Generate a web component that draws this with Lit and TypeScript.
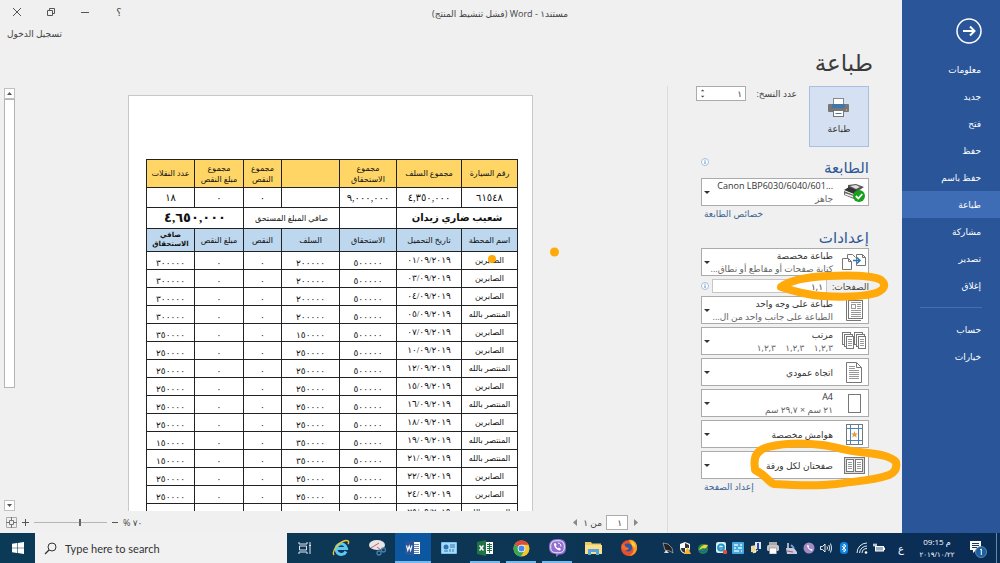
import { LitElement, html, css, svg, nothing } from "lit";
import type { TemplateResult } from "lit";
import { customElement, property } from "lit/decorators.js";
import { classMap } from "lit/directives/class-map.js";

type Glyph = TemplateResult;

const page = (x: number, y: number, w: number, h: number) =>
  svg`<rect x=${x} y=${y} width=${w} height=${h} fill="#fff" stroke="#777" />`;
const lines = (x: number, w: number, ys: number[]) =>
  ys.map((y) => svg`<path d=${`M${x} ${y}h${w}`} stroke="#999" />`);

const settingIcons: Record<string, Glyph> = {
  printer: html`<svg width="24" height="24" viewBox="0 0 24 24">
    <path d="M6 5l8-1 8 3-6 4-10-3z" fill="#555" /><path d="M8 6l6-1 4 2-4 2z" fill="#ddd" />
    <path d="M2 10l5-3 10 4-5 3z" fill="#333" /><path d="M2 11l10 4v4L2 15z" fill="#666" />
    <path d="M3 14l9 3" stroke="#eee" stroke-width="1.5" /><path d="M12 15l6-4v5l-6 3z" fill="#444" />
    <circle cx="17" cy="16" r="6" fill="#16a01c" />
    <path d="M13.800 16l2.500 2.500 4-4.500" fill="none" stroke="#fff" stroke-width="1.800" />
  </svg>`,
  custom: html`<svg width="24" height="24" viewBox="0 0 24 24" fill="#fff" stroke="#777">
    <path d="M5.500 13V4.500h5l3 3" /><path d="M.5 8.500h6l3 3v8h-9z" /><path d="M6.500 8.500v3h3" fill="none" />
    <path d="M14.500 4.500h6l3 3v8h-9z" /><path d="M20.500 4.500v3h3" fill="none" />
    <path d="M11 10.500h7M15 7.500l3 3-3 3" fill="none" stroke="#2b77b5" stroke-width="1.500" />
  </svg>`,
  single: html`<svg width="18" height="22" viewBox="0 0 18 22">
    ${page(3.5, 1.5, 14, 18)}<path d="M1.500 1v20.500H16" fill="none" stroke="#777" />
    <rect x="6.500" y="5.500" width="4" height="4" fill="none" stroke="#999" />
    ${lines(12, 4, [5.5, 7.5, 9.5])}${lines(6, 10, [3.5, 11.5, 13.5, 15.5, 17.5])}
  </svg>`,
  collate: html`<svg width="25" height="18" viewBox="0 0 25 18">
    ${page(0.5, 0.5, 8, 12)}${page(2.5, 2.5, 8, 12)}${page(4.5, 4.5, 7, 12)}
    ${page(12.5, 0.5, 8, 12)}${page(14.5, 2.5, 8, 12)}${page(16.5, 4.5, 7, 12)}
    ${lines(6, 4, [7.5, 9.5, 11.5, 13.5])}${lines(18, 4, [7.5, 9.5, 11.5, 13.5])}
  </svg>`,
  portrait: html`<svg width="16" height="21" viewBox="0 0 16 21">
    <path d="M.5.500h10l5 5v15H.5z" fill="#fff" stroke="#777" /><path d="M10.500.500v5h5" fill="none" stroke="#777" />
    ${lines(3, 6, [4.5, 6.5])}${lines(3, 10, [8.5, 10.5, 12.5, 14.5, 16.5])}
  </svg>`,
  size: html`<svg width="13" height="19" viewBox="0 0 13 19">${page(0.5, 0.5, 12, 18)}</svg>`,
  margins: html`<svg width="17" height="21" viewBox="0 0 17 21">
    ${page(0.5, 0.5, 16, 20)}
    <path d="M4.500 0v21M12.500 0v21M0 4.500h17M0 16.500h17" stroke="#4c86b5" fill="none" />
    <path d="M8.500 7l.9 2.400 2.600.1-2 1.600.7 2.500-2.200-1.500-2.200 1.500.7-2.500-2-1.600 2.600-.1z" fill="#e8953c" />
  </svg>`,
  sheets: html`<svg width="21" height="17" viewBox="0 0 21 17">
    <rect x=".5" y=".5" width="20" height="16" fill="#ddd" stroke="#777" />
    ${page(2.5, 2.5, 7, 12)}${page(11.5, 2.5, 7, 12)}
    ${lines(4, 4, [5.5, 7.5, 9.5, 11.5])}${lines(13, 4, [5.5, 7.5, 9.5, 11.5])}
  </svg>`,
};

const infoIcon = html`<svg width="8" height="8" viewBox="0 0 8 8" aria-hidden="true">
  <circle cx="4" cy="4" r="3.500" fill="#fff" stroke="#8fb0d6" stroke-width=".8" />
  <path d="M4 3.400v2.600M4 1.800v.9" stroke="#3f7cbf" stroke-width=".9" />
</svg>`;

@customElement("setting-picker")
class SettingPicker extends LitElement {
  @property() label = "";
  @property() value = "";
  @property() detail = "";
  @property() icon = "";

  static styles = css`
    :host { display: block; }
    .box {
      display: grid; grid-template-columns: 28px minmax(0, 1fr) 10px; align-items: center;
      height: 28px; box-sizing: border-box; border: 1px solid #ababab; background: #fff; color: #444;
    }
    .icon { display: flex; justify-content: center; }
    .text { display: flex; flex-direction: column; padding-right: 7px; font-size: 9px; line-height: 13px; }
    select {
      appearance: none; border: 0; padding: 0; margin: 0; background: none; color: #333;
      font: inherit; width: 100%; height: 13px; white-space: nowrap;
    }
    .detail { color: #666; white-space: pre; }
    .caret { border: 3px solid transparent; border-top-color: #333; border-bottom: 0; width: 0; justify-self: center; }
  `;

  render() {
    return html`<label class="box">
      <span class="icon">${settingIcons[this.icon]}</span>
      <span class="text">
        <select aria-label=${this.label}><option>${this.value}</option></select>
        ${this.detail ? html`<span class="detail">${this.detail}</span>` : nothing}
      </span>
      <span class="caret"></span>
    </label>`;
  }
}

const N = "المنتصر بالله";
const S = "الصابرين";
const trips: [string, string, string, string][] = [
  [S, "٠١", "٢٠٠٠٠٠", "٣٠٠٠٠٠"],
  [S, "٠٣", "٢٠٠٠٠٠", "٣٠٠٠٠٠"],
  [S, "٠٤", "٢٠٠٠٠٠", "٣٠٠٠٠٠"],
  [N, "٠٥", "٢٠٠٠٠٠", "٣٠٠٠٠٠"],
  [S, "٠٧", "١٥٠٠٠٠", "٣٥٠٠٠٠"],
  [S, "١٠", "٢٥٠٠٠٠", "٢٥٠٠٠٠"],
  [N, "١٢", "٢٥٠٠٠٠", "٢٥٠٠٠٠"],
  [S, "١٥", "٢٥٠٠٠٠", "٢٥٠٠٠٠"],
  [N, "١٦", "٢٥٠٠٠٠", "٢٥٠٠٠٠"],
  [S, "١٨", "٢٥٠٠٠٠", "٢٥٠٠٠٠"],
  [N, "١٩", "٣٥٠٠٠٠", "١٥٠٠٠٠"],
  [N, "٢١", "٣٥٠٠٠٠", "١٥٠٠٠٠"],
  [S, "٢٢", "٢٥٠٠٠٠", "٢٥٠٠٠٠"],
  [S, "٢٤", "٢٥٠٠٠٠", "٢٥٠٠٠٠"],
  [N, "٢٥", "٢٥٠٠٠٠", "٢٥٠٠٠٠"],
];

@customElement("trip-sheet")
class TripSheet extends LitElement {
  static styles = css`
    :host { display: block; }
    table {
      width: 100%; table-layout: fixed; border-collapse: collapse; color: #111;
      font: 8px/11px "Liberation Serif", "DejaVu Sans", serif; text-align: center;
    }
    td, th { border: 1px solid #222; padding: 0; font-weight: 400; overflow: hidden; white-space: nowrap; }
    .totals { height: 28px; background: #ffd666; }
    .values { height: 20px; font-size: 10px; }
    .driver { height: 21px; }
    .driver .name { font-weight: 700; font-size: 10px; line-height: 16px; }
    .driver .sum { font-weight: 700; font-size: 13px; line-height: 16px; }
    .heads { height: 23px; background: #bdd7ee; }
    .trip { height: 18px; font-size: 9px; }
    .trip .place { font-size: 8px; }
    .small { font-size: 7px; line-height: 9px; font-weight: 700; }
    .low { vertical-align: bottom; }
    .c1 { width: 56px; } .c2 { width: 65px; } .c3 { width: 57px; } .c4 { width: 58px; }
    .c5 { width: 38px; } .c6 { width: 49px; } .c7 { width: 48px; }
  `;

  render() {
    return html`<table dir="rtl">
      <colgroup>${[1, 2, 3, 4, 5, 6, 7].map((n) => html`<col class="c${n}" />`)}</colgroup>
      <tbody>
        <tr class="totals">
          <th>رقم السيارة</th><th>مجموع السلف</th><th>مجموع<br />الاستحقاق</th><th></th>
          <th>مجموع<br />النقص</th><th>مجموع<br />مبلغ النقص</th><th>عدد النقلات</th>
        </tr>
        <tr class="values">
          <td>٦١٥٤٨</td><td>٤,٣٥٠,٠٠٠</td><td>٩,٠٠٠,٠٠٠</td><td></td><td>٠</td><td>٠</td><td>١٨</td>
        </tr>
        <tr class="driver">
          <td colspan="2" class="name">شعيب ضاري زيدان</td><td></td>
          <td colspan="2">صافي المبلغ المستحق</td><td colspan="2" class="sum">٤,٦٥٠,٠٠٠</td>
        </tr>
        <tr class="heads">
          <th>اسم المحطة</th><th>تاريخ التحميل</th><th>الاستحقاق</th><th>السلف</th>
          <th>النقص</th><th>مبلغ النقص</th><th class="small">صافي<br />الاستحقاق</th>
        </tr>
        ${trips.map(
          ([place, day, advance, net]) => html`<tr class="trip">
            <td class="place">${place}</td><td>${day}/٠٩/٢٠١٩</td><td class="low">٥٠٠٠٠٠</td><td class="low">${advance}</td>
            <td class="low">٠</td><td class="low">٠</td><td class="low">${net}</td>
          </tr>`
        )}
      </tbody>
    </table>`;
  }
}

const apps: { name: string; state?: string; art: Glyph }[] = [
  { name: "Task View", art: html`<svg width="14" height="14" viewBox="0 0 14 14" fill="none" stroke="#dfe8f0">
      <path d="M1 1v2h8V1M1 13v-2h8v2M1.500 5h7v4h-7zM12 1v2M12 6v7" /><path d="M11 4.500h2" stroke-width="2" /></svg>` },
  { name: "Internet Explorer", art: html`<svg width="18" height="18" viewBox="0 0 18 18" fill="none">
      <path d="M14 12.500A5.300 5.300 0 1 1 14.500 9.500H5" stroke="#5cc8f2" stroke-width="3" />
      <path d="M2 16C-.5 13 6 3 14 1.500c3-.5 3 2 2 3.500" stroke="#f2c531" stroke-width="1.400" /></svg>` },
  { name: "Snipping Tool", art: html`<svg width="18" height="18" viewBox="0 0 18 18">
      <ellipse cx="9" cy="6" rx="8" ry="5" fill="#e9e4e6" /><path d="M3 9l8-5M9 8l4 3" stroke="#c0606a" fill="none" />
      <circle cx="11" cy="14" r="2" fill="none" stroke="#4d7fae" stroke-width="1.300" />
      <circle cx="15.500" cy="11" r="2" fill="none" stroke="#4d7fae" stroke-width="1.300" /></svg>` },
  { name: "Word", state: "active", art: html`<svg width="16" height="16" viewBox="0 0 16 16">
      <path d="M8 2h7v12H8z" fill="#fff" /><path d="M9 4.500h5M9 6.500h5M9 8.500h5M9 10.500h5M9 12.500h5" stroke="#2b579a" stroke-width=".7" />
      <path d="M0 2l9-2v16l-9-2z" fill="#2b579a" /><path d="M1.500 5.500l1.300 5 1.400-4.500 1.400 4.500 1.400-5" fill="none" stroke="#fff" stroke-width="1.100" /></svg>` },
  { name: "Control Panel", art: html`<svg width="16" height="12" viewBox="0 0 16 12">
      <rect width="16" height="12" rx="1" fill="#7cc4ee" /><rect x="1" y="1" width="14" height="10" fill="#a8dbf7" />
      <circle cx="5" cy="5" r="2.500" fill="#3273b5" /><path d="M9 3h5M9 5h5M3 9h4M9 7v3M12 7v3" stroke="#2f78b8" /></svg>` },
  { name: "Excel", state: "open", art: html`<svg width="16" height="16" viewBox="0 0 16 16">
      <path d="M8 2h8v12H8z" fill="#fff" /><path d="M10 4.500h5M10 6.500h5M10 8.500h5M10 10.500h5M12.500 3v10" stroke="#217346" />
      <path d="M0 2l9-2v16l-9-2z" fill="#217346" /><path d="M2.500 5.500l4 5M6.500 5.500l-4 5" stroke="#fff" stroke-width="1.400" /></svg>` },
  { name: "Chrome", state: "open", art: html`<svg width="17" height="17" viewBox="0 0 17 17">
      <circle cx="8.500" cy="8.500" r="8" fill="#f5c732" /><path d="M8.500 8.500L1.500 4.500A8 8 0 0 1 15.600 4.800H8.500z" fill="#e0483c" />
      <path d="M8.500 8.500L1.600 4.400A8 8 0 0 0 7.800 16.500l3.800-6z" fill="#3ba657" />
      <circle cx="8.500" cy="8.500" r="3.800" fill="#fff" /><circle cx="8.500" cy="8.500" r="3" fill="#4688f0" /></svg>` },
  { name: "Viber", state: "open", art: html`<svg width="17" height="18" viewBox="0 0 17 18">
      <path d="M8.500 0C15 0 17 2 17 8s-2 7.500-7 7.500L7 18v-3C2 14.500 0 13 0 8s2-8 8.500-8z" fill="#8f6fd0" />
      <path d="M8.500 1.700c5 0 6.800 1.500 6.800 6.200s-2 5.900-6.800 5.900-6.800-1.200-6.800-5.900 1.800-6.200 6.800-6.200z" fill="none" stroke="#fff" stroke-width=".9" />
      <path d="M5 4.500c0 4 2.500 6.500 6 7l1-1.500-2-1.500-1 .8C7.800 8.500 7 7.500 6.800 6.700l.9-.8L6.500 4z" fill="#fff" />
      <path d="M9 4c2 .2 3 1.300 3 3.500" stroke="#fff" fill="none" /></svg>` },
  { name: "File Explorer", art: html`<svg width="17" height="14" viewBox="0 0 17 14">
      <path d="M0 1h6l1 1.500h9V13H0z" fill="#f0c862" /><path d="M0 4h17v9H0z" fill="#fbdf8c" />
      <path d="M3 8h11v6h-3v-3H6v3H3z" fill="#56a5dc" /></svg>` },
  { name: "Firefox", art: html`<svg width="18" height="18" viewBox="0 0 18 18">
      <circle cx="9" cy="9" r="8" fill="#e8502a" /><path d="M9 1c5-1 9 4 8 9-1 4-4 7-8 7 4-2 5-5 4-8s-3-3-4-8z" fill="#fb9a25" />
      <path d="M11 2c3 1 5 4 4 7l-3-3z" fill="#ffd23c" /><circle cx="8" cy="8.500" r="4" fill="#2b55a8" />
      <path d="M2 5c1 0 3 1 4 3l3 1c-1 2-3 3-5 2-2-1-3-3-2-6z" fill="#f26b2a" /></svg>` },
];

const tray: Glyph[] = [
  svg`<path d="M1 1l5 1 4 4 1 5-3-2-5-1z" fill="#222" stroke="#ccc" stroke-width=".6"/><path d="M2 11h5L4 8z" fill="#ddd"/>`,
  svg`<path d="M1 2l5-2 5 2v4c0 3-2 5-5 6-3-1-5-3-5-6z" fill="#fff"/><path d="M6 1v5h4V3zM2 6h4v5C3 10 2 8 2 6z" fill="#333"/><path d="M8.500 5l3.500 7H5z" fill="#f5b52c"/>`,
  svg`<circle cx="6" cy="7" r="5" fill="#238b45"/><path d="M2 8c2-5 6-6 9-5-1 3-3 4-5 3z" fill="#f0d43a"/><path d="M2 9l5 1 2-3" stroke="#2060b0" stroke-width="1.500" fill="none"/>`,
  svg`<rect x="1" width="10" height="11" rx="2" fill="#d8eef7"/><circle cx="6" cy="5.500" r="3" stroke="#2495c4" stroke-width="1.800" fill="none"/><path d="M4 6h5" stroke="#2495c4" stroke-width="1.500"/><circle cx="10" cy="10" r="2.200" fill="#e0503a"/>`,
  svg`<rect width="12" height="12" rx="1" fill="#48a9e0"/><path d="M2 3h4M8 3h2M2 6h2M6 6h4M2 9h5M9 9h1" stroke="#d9f2ff" stroke-width="1.500"/>`,
  svg`<path d="M1 4l5-1v8l-5-1z" fill="#f0d890"/><rect x="5" width="6" height="7" fill="#dfe6f5"/><path d="M8 1v6" stroke="#2d4aa8" stroke-width="2"/><path d="M3 11l5-3" stroke="#fff"/>`,
  svg`<rect x="2" width="8" height="4" fill="#aaa"/><rect y="3" width="12" height="6" rx="1.500" fill="#c9c2c4"/><rect x="2.500" y="6" width="7" height="6" fill="#fff" stroke="#888" stroke-width=".6"/>`,
  svg`<path d="M3 1v5" stroke="#ddd" stroke-width="1.500"/><path d="M1 6h8l3 4v2H2z" fill="#c5cbe0"/><path d="M2 9l6 1" stroke="#c05058"/><path d="M6 3l3 3" stroke="#7898d8" stroke-width="2"/>`,
  svg`<circle cx="6" cy="6" r="5.500" fill="#a58bc4"/><path d="M4 3c0 3 2 5 5 6l.6-1.200-1.600-1-.8.5-1.700-2 .7-.7L5.200 3z" fill="#fff"/>`,
  svg`<path d="M.5 4.500h2L5 2v8L2.500 7.500h-2z" fill="none" stroke="#fff" stroke-width=".9"/><path d="M7 4.500q1 1.500 0 3M8.800 3q2 3 0 6M10.500 1.500q2.500 4.500 0 9" fill="none" stroke="#fff" stroke-width=".9"/>`,
  svg`<rect x="2" width="8" height="12" rx="3.500" fill="#1284e0"/><path d="M4 4l4 4-2 2V2l2 2-4 4" fill="none" stroke="#fff" stroke-width=".9"/>`,
  svg`<path d="M1 11A10 10 0 0 1 11 1M3.500 11A7.500 7.500 0 0 1 11 4M6 11a5 5 0 0 1 5-4.500" fill="none" stroke="#e3e9f0" stroke-width="1"/><circle cx="10" cy="10.500" r="1.300" fill="#fff"/>`,
  svg`<rect x="2.500" y="4.500" width="8" height="4.500" fill="#9fb0c0" stroke="#fff"/><path d="M11.500 5.500v2.500M0 3h4M1 1.500v3M3 1.500v3" stroke="#fff"/>`,
];

@customElement("task-bar")
class TaskBar extends LitElement {
  static styles = css`
    :host { display: block; }
    .bar {
      display: flex; height: 30px; color: #fff; direction: ltr;
      background: linear-gradient(90deg, #0b3a56, #0d3554 55%, #092c55);
    }
    button { appearance: none; border: 0; padding: 0; background: none; color: inherit; display: flex; align-items: center; justify-content: center; font: inherit; }
    .start { width: 35px; }
    .search {
      width: 252px; box-sizing: border-box; background: #f1f1f2; color: #444; display: flex; align-items: center;
      gap: 8px; padding-left: 9px;
    }
    .search input {
      border: 0; padding: 0; background: none; outline: 0; min-width: 0; flex: 1;
      font: 11px "Lato", "Noto Sans", sans-serif; color: #444;
    }
    .search input::placeholder { color: #333; opacity: 1; }
    .app { width: 36px; box-sizing: border-box; border: 0 solid #76b9ed; }
    .app.open { border-bottom-width: 2px; padding-top: 2px; width: 30px; margin: 0 3px; }
    .app.active { border-bottom-width: 2px; padding-top: 2px; background: #0d57a0; }
    .space { flex: 1; }
    .tray { width: 229px; display: flex; align-items: center; justify-content: space-around; }
    .lang { width: 26px; font: 10px "DejaVu Sans", sans-serif; }
    .clock { width: 46px; display: flex; flex-direction: column; align-items: center; justify-content: center;
      font: 8px/13px "Open Sans", "DejaVu Sans", sans-serif; white-space: nowrap; }
    .clock .date { font-size: 7px; }
    .note { width: 36px; }
    .peek { width: 3px; border-left: 1px solid #6d87a3; }
  `;

  render() {
    return html`<footer class="bar">
      <button class="start" aria-label="Start">
        <svg width="12" height="12" viewBox="0 0 12 12" fill="#fff"><path d="M0 1.800l5-.8v4.700H0zM5.600.900L12 0v5.700H5.600zM0 6.300h5V11l-5-.8zM5.600 6.300H12V12l-6.400-.9z" /></svg>
      </button>
      <label class="search">
        <svg width="13" height="13" viewBox="0 0 13 13" fill="none" stroke="#333"><circle cx="8" cy="5" r="4" /><path d="M5 8L1 12" stroke-width="1.300" /></svg>
        <input type="search" placeholder="Type here to search" aria-label="Search" />
      </label>
      ${apps.map((a) => html`<button class=${classMap({ app: true, open: a.state === "open", active: a.state === "active" })} aria-label=${a.name}>${a.art}</button>`)}
      <span class="space"></span>
      <div class="tray">${tray.map((t) => html`<svg width="12" height="12" viewBox="0 0 12 12">${t}</svg>`)}</div>
      <button class="lang">ع</button>
      <div class="clock"><span dir="ltr">09:15 م</span><span class="date">٢٠١٩/١٠/٢٢</span></div>
      <button class="note" aria-label="Notifications">
        <svg width="20" height="20" viewBox="0 0 20 20"><path d="M2 3h11v9H8l-3 3v-3H2z" fill="#fff" /><path d="M4 5.500h7M4 7.500h7M4 9.500h5" stroke="#1b3b60" />
          <circle cx="13" cy="14" r="5.500" fill="#1b5f9c" stroke="#6f9cc8" stroke-width=".8" /><path d="M12 12l1.300-1v6" fill="none" stroke="#fff" /></svg>
      </button>
      <span class="peek"></span>
    </footer>`;
  }
}

const navItems = ["معلومات", "جديد", "فتح", "حفظ", "حفظ باسم", "طباعة", "مشاركة", "تصدير", "إغلاق"];

@customElement("app-root")
class AppRoot extends LitElement {
  static styles = css`
    :host { display: block; font-family: "Open Sans", "DejaVu Sans", sans-serif; }
    .app { position: relative; min-height: 100vh; display: flex; flex-direction: column; background: #f0f0f0; color: #444; font-size: 9px; overflow: hidden; }
    .backstage { flex: 1; display: flex; }
    button, input { font: inherit; color: inherit; }
    button { appearance: none; border: 0; padding: 0; background: none; }
    a { color: #3d6493; text-decoration: none; }

    .nav { width: 98px; flex: none; background: #2a5699; color: #fff; display: flex; flex-direction: column; }
    .nav .back { align-self: flex-start; margin: 18px 18px 12px 0; height: 26px; }
    .nav a { display: flex; align-items: center; height: 27px; padding: 0 19px; color: #fff; }
    .nav a.current { background: #3e6db5; }
    .nav hr { width: 62px; border: 0; border-top: 1px solid #476fab; margin: 8px auto; }

    .main { flex: 1; min-width: 0; display: flex; flex-direction: column; }
    .titlebar { display: grid; grid-template-columns: 1fr auto 1fr; align-items: center; height: 24px; }
    .windowing { display: flex; justify-content: flex-end; grid-column: 3; }
    .windowing button { width: 34px; height: 22px; display: flex; align-items: center; justify-content: center; font-size: 10px; }
    .title { grid-column: 2; margin-left: 98px; white-space: nowrap; padding-top: 3px; }
    .account { height: 18px; display: flex; justify-content: flex-end; align-items: center; padding-left: 7px; }
    .account a { color: #444; }
    .work { flex: 1; display: flex; }

    .panel { width: 235px; flex: none; display: flex; flex-direction: column; }
    h1 { margin: 0; height: 44px; line-height: 40px; padding-right: 29px; font-size: 23px; font-weight: 400; color: #3b3b3b; }
    .body { flex: 1; border-left: 1px solid #dcdcdc; padding: 0 33px; display: flex; flex-direction: column; }
    .launch { display: flex; align-items: flex-start; gap: 12px; }
    .print { width: 60px; height: 61px; flex: none; border: 1px solid #a9bfe2; background: #d5e1f2; display: flex; flex-direction: column; align-items: center; justify-content: center; gap: 5px; color: #333; }
    .copies { flex: 1; display: flex; align-items: center; justify-content: space-between; height: 15px; white-space: nowrap; margin-left: -5px; }
    .spin { display: flex; align-items: center; width: 50px; height: 15px; box-sizing: border-box; border: 1px solid #ababab; background: #fff; padding: 0 3px; }
    .spin input { border: 0; padding: 0; width: 100%; min-width: 0; background: none; outline: 0; }
    h2 { margin: 0; font-size: 15px; line-height: 22px; font-weight: 400; color: #2f5796; }
    .head { display: flex; justify-content: space-between; align-items: flex-start; }
    .head svg { margin-top: 2px; }
    .printer { margin-top: 9px; }
    .options { margin-top: 4px; }
    .stack { display: flex; flex-direction: column; gap: 3px; }
    .link { align-self: flex-end; line-height: 16px; padding-left: 3px; }
    .pages { display: flex; align-items: center; height: 14px; white-space: nowrap; }
    .pages label { width: 42px; flex: none; }
    .pages input { flex: 1; min-width: 0; height: 14px; box-sizing: border-box; border: 1px solid #c6c6c6; background: #fff; padding: 0 3px; margin-left: 3px; }

    .preview { flex: 1; min-width: 0; display: flex; flex-direction: column; padding-top: 46px; }
    .view { flex: 1; display: flex; }
    .canvas { flex: 1; min-width: 0; display: flex; justify-content: center; padding-right: 26px; padding-top: 7px; box-sizing: border-box; height: 423px; }
    .sheet { width: 66%; max-width: 405px; box-sizing: border-box; background: #fff; border: 1px solid #c8c8c8; border-bottom: 0; padding: 63px 14px 0 18px; overflow: hidden; }
    .scroll { width: 11px; flex: none; margin: 0 5px 0 4px; display: flex; flex-direction: column; }
    .scroll button { height: 11px; border: 1px solid #c0c0c0; background: #fff; display: flex; align-items: center; justify-content: center; }
    .track { flex: 1; display: flex; }
    .thumb { flex: 1; height: 72%; box-sizing: border-box; border: 1px solid #b4b4b4; background: #fff; }
    .status { height: 22px; display: flex; direction: ltr; align-items: center; padding-left: 6px; padding-right: 27px; }
    .zoomer { display: flex; align-items: center; gap: 5px; }
    .zoomer button { display: flex; }
    .range { appearance: none; width: 73px; height: 9px; margin: 0; background: linear-gradient(#b5b5b5, #b5b5b5) center / 100% 1px no-repeat; }
    .range::-webkit-slider-thumb { appearance: none; width: 2px; height: 7px; background: #666; }
    .gap { flex: 1; }
    .pager { display: flex; align-items: center; gap: 4px; }
    .pager input { width: 22px; height: 15px; box-sizing: border-box; border: 1px solid #ababab; background: #fff; padding: 0 5px; text-align: right; }
    .pager button { width: 8px; display: flex; justify-content: center; }
    .ink { position: absolute; top: 0; right: 0; pointer-events: none; }
  `;

  render() {
    return html`<div class="app" dir="rtl">
      <div class="backstage">
        <nav class="nav">
          <button class="back" aria-label="رجوع">
            <svg width="26" height="26" viewBox="0 0 26 26" fill="none" stroke="#fff"><circle cx="13" cy="13" r="12" stroke-width="1.500" /><path d="M7 13h11M14 8.500l4.500 4.500-4.500 4.500" stroke-width="2" /></svg>
          </button>
          ${navItems.map((t, i) => html`<a href="#" class=${classMap({ current: i === 5 })}>${t}</a>`)}
          <hr />
          <a href="#">حساب</a><a href="#">خيارات</a>
        </nav>
        <main class="main">
          <header class="titlebar">
            <span class="title">مستند١ - Word (فشل تنشيط المنتج)</span>
            <div class="windowing">
              <button>؟</button>
              <button aria-label="تصغير"><svg width="8" height="8" viewBox="0 0 8 8"><path d="M0 4.500h8" stroke="#555" /></svg></button>
              <button aria-label="استعادة"><svg width="8" height="8" viewBox="0 0 8 8" fill="none" stroke="#555"><path d="M.5 2.500h5v5h-5zM2.500 2V.500h5v5H6" /></svg></button>
              <button aria-label="إغلاق"><svg width="8" height="8" viewBox="0 0 8 8" stroke="#555"><path d="M0 0l8 8M8 0L0 8" /></svg></button>
            </div>
          </header>
          <div class="account"><a href="#">تسجيل الدخول</a></div>
          <div class="work">
            <section class="panel">
              <h1>طباعة</h1>
              <div class="body">
                <div class="launch">
                  <button class="print">
                    <svg width="22" height="19" viewBox="0 0 22 19"><rect y="6" width="21" height="8" rx="1" fill="#777" /><rect x="5.500" y=".5" width="10" height="7" fill="#fff" stroke="#888" />
                      <rect x="4" y="6" width="13" height="4" fill="#3f78a8" /><rect x="5.500" y="12.500" width="10" height="6" fill="#fff" stroke="#777" /><path d="M7.500 15.500h6" stroke="#3f78a8" /><circle cx="18.500" cy="12" r=".8" fill="#f5a87a" /></svg>
                    <span>طباعة</span>
                  </button>
                  <div class="copies">
                    <label for="copies">عدد النسخ:</label>
                    <span class="spin"><input id="copies" value="١" />
                      <svg width="6" height="11" viewBox="0 0 6 11" fill="#444"><path d="M1 3l2-2 2 2zM1 8l2 2 2-2z" /></svg></span>
                  </div>
                </div>
                <div class="head printer"><h2>الطابعة</h2>${infoIcon}</div>
                <setting-picker label="الطابعة" icon="printer" value=${"Canon LBP6030/6040/601...\u200e"} detail="جاهز"></setting-picker>
                <a class="link" href="#">خصائص الطابعة</a>
                <div class="head options"><h2>إعدادات</h2></div>
                <div class="stack">
                  <setting-picker label="نطاق الطباعة" icon="custom" value="طباعة مخصصة" detail="كتابة صفحات أو مقاطع أو نطاق..."></setting-picker>
                  <div class="pages"><label for="pages">الصفحات:</label><input id="pages" value="١,١" />${infoIcon}</div>
                  <setting-picker label="الأوجه" icon="single" value="طباعة على وجه واحد" detail="الطباعة على جانب واحد من ال..."></setting-picker>
                  <setting-picker label="الترتيب" icon="collate" value="مرتب" detail="١,٢,٣    ١,٢,٣    ١,٢,٣"></setting-picker>
                  <setting-picker label="الاتجاه" icon="portrait" value="اتجاه عمودي"></setting-picker>
                  <setting-picker label="حجم الورق" icon="size" value="A4" detail="٢١ سم × ٢٩,٧ سم"></setting-picker>
                  <setting-picker label="الهوامش" icon="margins" value="هوامش مخصصة"></setting-picker>
                  <setting-picker label="صفحات لكل ورقة" icon="sheets" value="صفحتان لكل ورقة"></setting-picker>
                </div>
                <a class="link" href="#">إعداد الصفحة</a>
              </div>
            </section>
            <section class="preview">
              <div class="view">
                <div class="canvas"><div class="sheet"><trip-sheet></trip-sheet></div></div>
                <div class="scroll">
                  <button aria-label="أعلى"><svg width="5" height="3" viewBox="0 0 5 3"><path d="M0 3l2.500-3L5 3z" fill="#555" /></svg></button>
                  <div class="track"><div class="thumb"></div></div>
                  <button aria-label="أسفل"><svg width="5" height="3" viewBox="0 0 5 3"><path d="M0 0l2.500 3L5 0z" fill="#555" /></svg></button>
                </div>
              </div>
              <div class="status">
                <div class="zoomer">
                  <button aria-label="ملاءمة"><svg width="11" height="11" viewBox="0 0 11 11" fill="none" stroke="#777"><path d="M.5.500h10v10H.5z" stroke="#aaa" /><path d="M3.500 3.500h4v4h-4zM5.500 0v3M5.500 8v3M0 5.500h3M8 5.500h3" /></svg></button>
                  <button aria-label="تكبير"><svg width="7" height="7" viewBox="0 0 7 7"><path d="M0 3.500h7M3.500 0v7" stroke="#555" /></svg></button>
                  <input class="range" type="range" dir="ltr" min="0" max="100" value="63" aria-label="التكبير" />
                  <button aria-label="تصغير"><svg width="6" height="7" viewBox="0 0 6 7"><path d="M0 3.500h6" stroke="#555" /></svg></button>
                  <span>% ٧٠</span>
                </div>
                <span class="gap"></span>
                <div class="pager">
                  <button aria-label="التالي"><svg width="4" height="7" viewBox="0 0 4 7"><path d="M4 0v7L0 3.500z" fill="#888" /></svg></button>
                  <span dir="rtl">من ١</span>
                  <input value="١" aria-label="الصفحة" />
                  <button aria-label="السابق"><svg width="4" height="7" viewBox="0 0 4 7"><path d="M0 0v7l4-3.500z" fill="#888" /></svg></button>
                </div>
              </div>
            </section>
          </div>
        </main>
      </div>
      <task-bar></task-bar>
      <svg class="ink" width="1000" height="563" viewBox="0 0 1000 563" fill="none" stroke="#ffa90a" stroke-width="8" stroke-linecap="round" stroke-linejoin="round" aria-hidden="true">
        <path d="M781 287C790 280 806 277 828 276C850 275 872 275 881 280C887 285 884 290 876 293C862 297 838 297 822 296C806 295 790 290 781 287Z" />
        <path d="M755 468C753 457 757 450 768 447C784 443 806 443 822 445C838 447 846 451 860 452C876 454 889 455 896 462C897 467 896 472 889 475C872 481 856 481 836 484C818 486 790 485 774 484C768 482 766 475 755 470Z" />
        <circle cx="492" cy="259" r="4" fill="#ffa90a" stroke="none" /><circle cx="554.500" cy="252" r="4.500" fill="#ffa90a" stroke="none" />
      </svg>
    </div>`;
  }
}
